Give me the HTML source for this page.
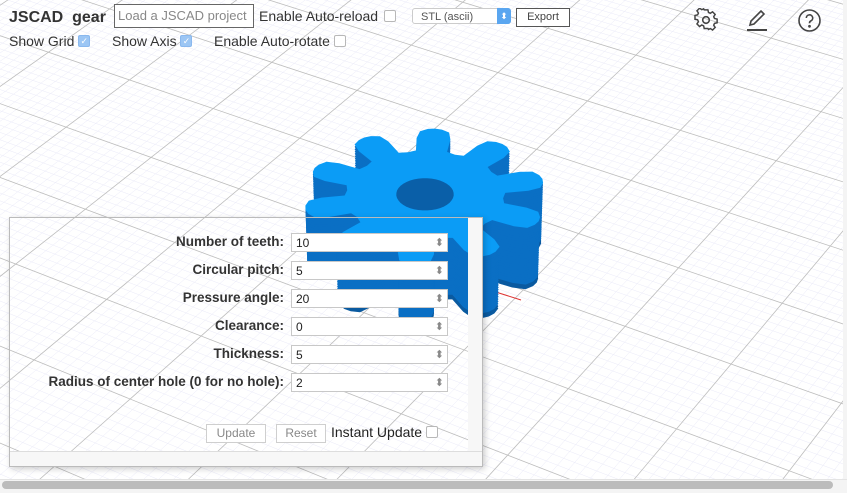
<!DOCTYPE html>
<html><head><meta charset="utf-8"><style>
html,body{margin:0;padding:0;width:847px;height:493px;overflow:hidden;background:#fff;font-family:"Liberation Sans",sans-serif;color:#222;position:relative}
#bg{position:absolute;left:0;top:0}
.a{position:absolute;white-space:nowrap}
.cb{display:inline-block;width:10px;height:10px;border:1px solid #b8b8b8;border-radius:2px;background:#fff;vertical-align:middle;position:relative;top:-1px}
.cbc{background:#9cc6f4;border-color:#8ab8ee;color:#fff;font-size:9px;line-height:10px;text-align:center}
.lbl{position:absolute;right:0;font-weight:bold;font-size:13.5px;color:#333;text-align:right}
.inp{position:absolute;left:281px;height:19px;border:1px solid #c8c8c8;background:#fff;font-size:12px;line-height:19px;padding-left:4px;box-sizing:border-box;width:157px}
.inp:after{content:"⬍";position:absolute;right:3px;top:0;font-size:11px;color:#888}
.btn{position:absolute;border:1px solid #cfcfcf;background:#fff;font-size:12px;color:#888;text-align:center;line-height:17px;height:17px}
</style></head><body>
<svg id="bg" width="847" height="493"></svg>
<div class="a" style="left:9px;top:9px;font-size:16px;font-weight:bold;color:#333">JSCAD&nbsp; gear</div>
<div class="a" style="left:114px;top:4px;height:22px;border:1px solid #666;background:#fff;font-size:13px;color:#888;line-height:22px;padding-left:3px;overflow:hidden;width:135px">Load a JSCAD project</div>
<div class="a" style="left:259px;top:8px;font-size:14px;color:#333">Enable Auto-reload <span class="cb" style="margin-left:2px"></span></div>
<div class="a" style="left:412px;top:8px;height:16px;border:1px solid #ccc;border-radius:3px;background:#fff;font-size:11px;color:#555;line-height:16px;padding-left:8px;box-sizing:border-box;width:99px">STL (ascii)<span style="position:absolute;right:-1px;top:-1px;width:14px;height:16px;background:#5aa6f0;border-radius:0 3px 3px 0;color:#fff;font-size:9px;text-align:center">⬍</span></div>
<div class="a" style="left:516px;top:8px;width:52px;height:17px;border:1px solid #555;background:#fff;font-size:11px;color:#444;text-align:center;line-height:17px">Export</div>
<div class="a" style="left:9px;top:33px;font-size:14px;color:#333">Show Grid <span class="cb cbc">✓</span></div>
<div class="a" style="left:112px;top:33px;font-size:14px;color:#333">Show Axis <span class="cb cbc">✓</span></div>
<div class="a" style="left:214px;top:33px;font-size:14px;color:#333">Enable Auto-rotate <span class="cb"></span></div>
<svg class="a" style="left:694px;top:8px" width="24" height="24" viewBox="0 0 24 24" fill="none" stroke="#444" stroke-width="1.6"><path d="M10 2h4l.6 2.8 2 .9 2.4-1.6 2.8 2.8-1.6 2.4.9 2 2.8.6v4l-2.8.6-.9 2 1.6 2.4-2.8 2.8-2.4-1.6-2 .9L14 22h-4l-.6-2.8-2-.9L5 19.9 2.2 17.1l1.6-2.4-.9-2L.1 12.1V8l2.8-.6.9-2L2.2 3l2.8-2.8 2.4 1.6 2-.9z" transform="translate(0.9 0) scale(0.93)"/><circle cx="12" cy="12" r="3.3"/></svg>
<svg class="a" style="left:745px;top:7px" width="24" height="26" viewBox="0 0 24 26" fill="none" stroke="#444" stroke-width="1.6"><path d="M5 18l1-4L16 4l3 3L9 17z"/><path d="M2 23h20" stroke-width="2"/></svg>
<svg class="a" style="left:797px;top:8px" width="25" height="25" viewBox="0 0 25 25" fill="none" stroke="#444" stroke-width="1.6"><circle cx="12.5" cy="12.5" r="10.5"/><path d="M9.3 10a3.2 3.2 0 1 1 4.4 3c-1 .5-1.2 1.1-1.2 2.3"/><circle cx="12.5" cy="18.3" r=".6" fill="#444"/></svg>

<div class="a" style="left:9px;top:217px;width:474px;height:250px;border:1px solid #bbb;box-sizing:border-box;box-shadow:2px 2px 6px rgba(0,0,0,.2)">
 <div style="position:absolute;right:0;top:0;width:14px;height:100%;background:#f7f7f7"></div>
 <div style="position:absolute;left:0;bottom:0;width:100%;height:14px;background:#f7f7f7;border-top:1px solid #ddd"></div>
 <div style="position:absolute;left:0;top:0;width:274px;height:200px">
  <div class="lbl" style="top:16px">Number of teeth:</div>
  <div class="lbl" style="top:44px">Circular pitch:</div>
  <div class="lbl" style="top:72px">Pressure angle:</div>
  <div class="lbl" style="top:100px">Clearance:</div>
  <div class="lbl" style="top:128px">Thickness:</div>
  <div class="lbl" style="top:156px">Radius of center hole (0 for no hole):</div>
 </div>
 <div class="inp" style="top:15px">10</div>
 <div class="inp" style="top:43px">5</div>
 <div class="inp" style="top:71px">20</div>
 <div class="inp" style="top:99px">0</div>
 <div class="inp" style="top:127px">5</div>
 <div class="inp" style="top:155px">2</div>
 <div class="btn" style="left:196px;top:206px;width:58px">Update</div>
 <div class="btn" style="left:266px;top:206px;width:48px">Reset</div>
 <div class="a" style="left:321px;top:206px;font-size:14px;color:#222">Instant Update <span class="cb"></span></div>
</div>
<div class="a" style="left:0;top:479px;width:847px;height:14px;background:#f4f4f4;border-top:1px solid #e4e4e4;box-sizing:border-box"></div>
<div class="a" style="left:2px;top:481px;width:831px;height:8px;background:#bcbcbc;border-radius:4px"></div>
<div class="a" style="left:843px;top:0;width:4px;height:479px;background:#f4f4f4"></div>

<script>
var s=document.getElementById('bg'),h='';
var th=-0.55,ph=0.62,D=230,f=2600,cx=425,cy=255;
function P(X,Y,Z){Z=Z||0;var u=X*Math.cos(th)-Y*Math.sin(th),v=X*Math.sin(th)+Y*Math.cos(th);
var z=D+v*Math.cos(ph)-Z*Math.sin(ph);var yy=v*Math.sin(ph)+Z*Math.cos(ph);return [cx+f*u/z,cy-f*yy/z];}
function L(a,b,c,w){h+='<line x1="'+a[0].toFixed(1)+'" y1="'+a[1].toFixed(1)+'" x2="'+b[0].toFixed(1)+'" y2="'+b[1].toFixed(1)+'" stroke="'+c+'" stroke-width="'+w+'"/>';}
var M=200,vmin=-120;
function seg(x1,y1,x2,y2,c,w){
 var v1=x1*Math.sin(th)+y1*Math.cos(th),v2=x2*Math.sin(th)+y2*Math.cos(th);
 if(v1<vmin&&v2<vmin)return;
 if(v1<vmin){var t=(vmin-v1)/(v2-v1);x1+=t*(x2-x1);y1+=t*(y2-y1);}
 if(v2<vmin){var t=(vmin-v2)/(v1-v2);x2+=t*(x1-x2);y2+=t*(y1-y2);}
 L(P(x1,y1),P(x2,y2),c,w);}
for(var i=-M;i<=M;i+=1){if(i%10==0)continue;seg(i,-M,i,M,'#eaeaf8',0.5);seg(-M,i,M,i,'#eaeaf8',0.5);}
for(var i=-M;i<=M;i+=10){seg(i,-M,i,M,'#bdbdbd',0.8);seg(-M,i,M,i,'#bdbdbd',0.8);}
var S=0.92;
function gear(Z){var pts=[];for(var k=0;k<10;k++){var a0=k*Math.PI/5+0.15;
 var prof=[[-0.2,7.6],[-0.17,9.8],[-0.13,11.0],[-0.06,11.4],[0,11.5],[0.06,11.4],[0.13,11.0],[0.17,9.8],[0.2,7.6],[0.31,7.4],[0.43,7.6]];
 prof.forEach(function(p){var a=a0+p[0],r=p[1]*S;pts.push(P(r*Math.cos(a),r*Math.sin(a),Z));});}
 return 'M'+pts.map(function(p){return p[0].toFixed(1)+' '+p[1].toFixed(1)}).join('L')+'Z';}
function circ(Z,r){var p=[];for(var k=0;k<40;k++){var a=k*Math.PI/20;p.push(P(r*Math.cos(a),r*Math.sin(a),Z));}return 'M'+p.map(function(q){return q[0].toFixed(1)+' '+q[1].toFixed(1)}).join('L')+'Z';}
h+='<line x1="480" y1="287" x2="521" y2="300" stroke="#d33" stroke-width="1"/>';
h+='<line x1="423" y1="140" x2="423" y2="148" stroke="#22c" stroke-width="1"/>';
for(var z=0;z<6.5;z+=0.25)h+='<path d="'+gear(z)+'" fill="'+(z<0.3?'#0a5aa0':'#0a6fc4')+'"/>';
h+='<path d="'+gear(6.5)+'" fill="#0b9cf6"/>';
h+='<path d="'+circ(6.5,2.5)+'" fill="#0a5fa8"/>';
s.innerHTML=h;
</script>
</body></html>
